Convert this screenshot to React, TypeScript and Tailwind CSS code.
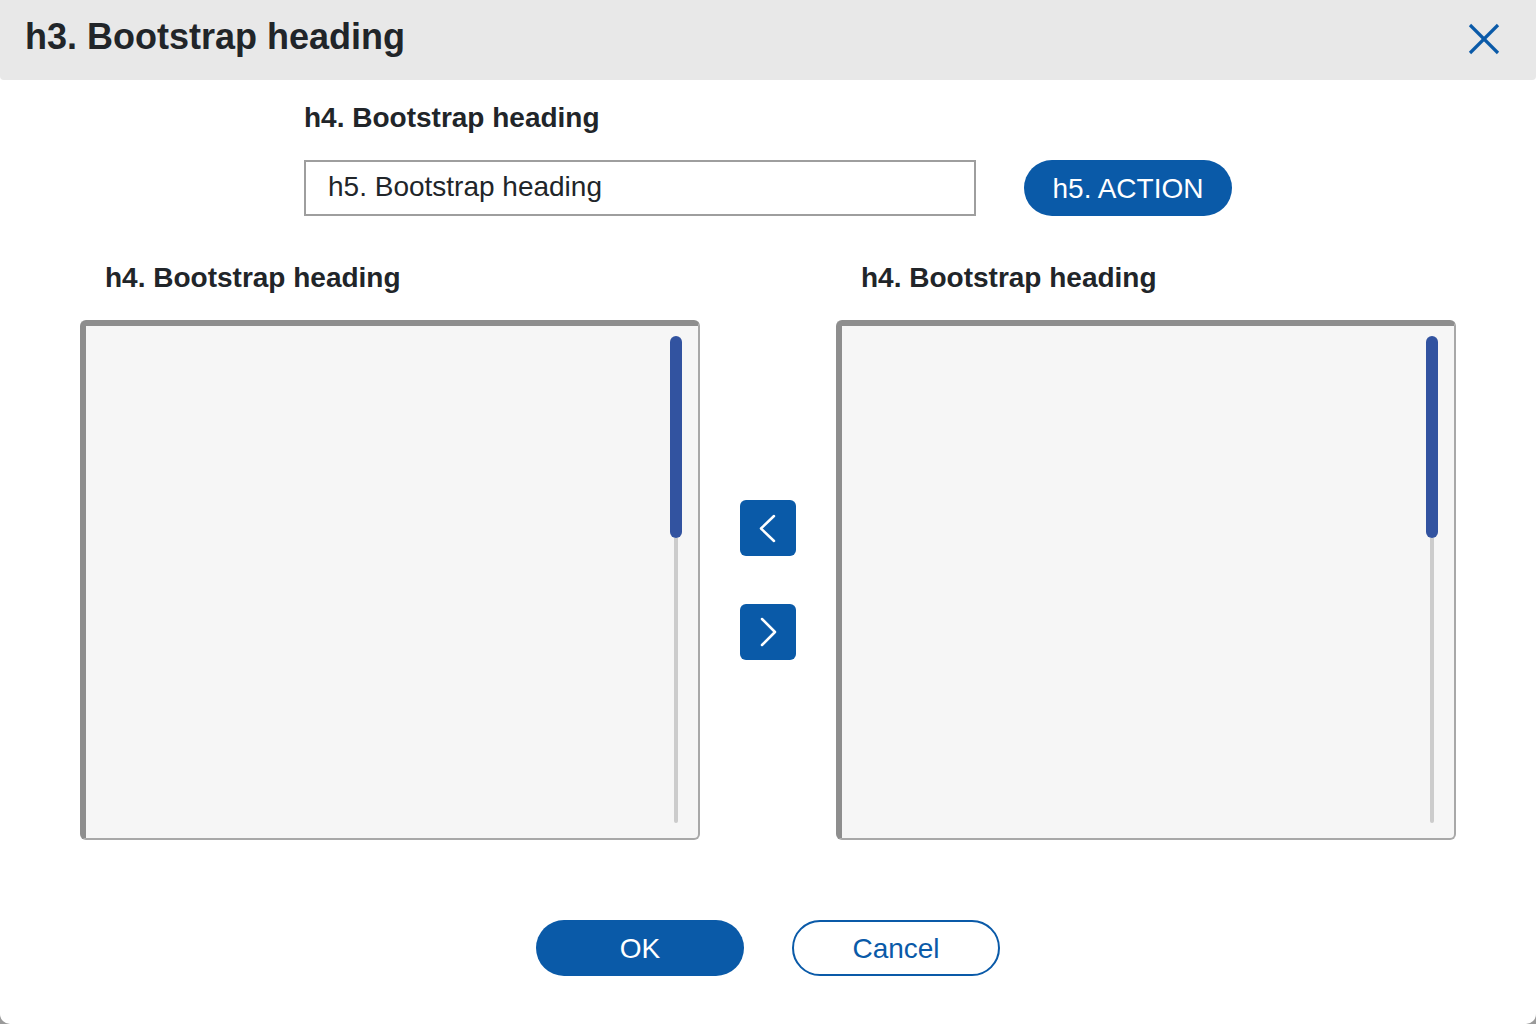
import React from "react";

const font = { fontFamily: '"Liberation Sans", Arial, sans-serif' };

function ListBox() {
  return (
    <div className="w-[620px] h-[520px] bg-[#f6f6f6] rounded-[6px] border-t-[6px] border-l-[6px] border-r-[2px] border-b-[2px] border-t-[#8e8e8e] border-l-[#8e8e8e] border-r-[#a8a8a8] border-b-[#a8a8a8] flex justify-end pt-[10px] pb-[15px] pr-[16px]">
      <div className="w-[12px] flex flex-col items-center">
        <div className="w-[12px] h-[202px] rounded-full bg-[#3253a0]" />
        <div className="w-[4px] flex-1 bg-[#cccccc] rounded-b-full" />
      </div>
    </div>
  );
}

export default function App() {
  return (
    <div className="w-[1536px] h-[1024px] bg-[#9a9a9a]" style={font}>
      <div className="w-full h-full bg-white rounded-b-[10px] flex flex-col">
        <div className="h-[80px] bg-[#e8e8e8] rounded-b-[4px] flex items-center justify-between pl-[25px] pr-[36px]">
          <div className="text-[36px] leading-[40px] font-bold text-[#212529] -mt-[7px]">h3. Bootstrap heading</div>
          <svg width="32" height="32" viewBox="0 0 32 32" className="-mt-[2px]">
            <line x1="2" y1="2" x2="30" y2="30" stroke="#0a5aa8" strokeWidth="3.2" />
            <line x1="30" y1="2" x2="2" y2="30" stroke="#0a5aa8" strokeWidth="3.2" />
          </svg>
        </div>

        <div className="pl-[304px] pt-[22px]">
          <div className="text-[28px] leading-[32px] font-bold text-[#212529]">h4. Bootstrap heading</div>
          <div className="flex items-center gap-[48px] mt-[26px]">
            <div className="w-[672px] h-[56px] border-2 border-[#9e9e9e] flex items-center pl-[22px] pb-[2px] text-[28px] text-[#212529]">
              h5. Bootstrap heading
            </div>
            <button className="w-[208px] h-[56px] rounded-full bg-[#0a5aa8] text-white text-[28px] flex items-center justify-center pt-[2px]">
              h5. ACTION
            </button>
          </div>
        </div>

        <div className="flex pl-[80px] mt-[46px]">
          <div className="flex flex-col">
            <div className="pl-[25px] text-[28px] leading-[32px] font-bold text-[#212529]">h4. Bootstrap heading</div>
            <div className="mt-[26px]">
              <ListBox />
            </div>
          </div>
          <div className="w-[136px] flex flex-col items-center justify-center gap-[48px] pt-[58px]">
            <button className="w-[56px] h-[56px] rounded-[6px] bg-[#0a5aa8] flex items-center justify-center">
              <svg width="56" height="56" viewBox="0 0 56 56">
                <polyline points="34,16 21,28.5 34,41" fill="none" stroke="white" strokeWidth="2.5" strokeLinecap="round" strokeLinejoin="round" />
              </svg>
            </button>
            <button className="w-[56px] h-[56px] rounded-[6px] bg-[#0a5aa8] flex items-center justify-center">
              <svg width="56" height="56" viewBox="0 0 56 56">
                <polyline points="22,15 35,28 22,41" fill="none" stroke="white" strokeWidth="2.5" strokeLinecap="round" strokeLinejoin="round" />
              </svg>
            </button>
          </div>
          <div className="flex flex-col">
            <div className="pl-[25px] text-[28px] leading-[32px] font-bold text-[#212529]">h4. Bootstrap heading</div>
            <div className="mt-[26px]">
              <ListBox />
            </div>
          </div>
        </div>

        <div className="flex justify-center gap-[48px] mt-[80px]">
          <button className="w-[208px] h-[56px] rounded-full bg-[#0a5aa8] text-white text-[28px] flex items-center justify-center pt-[2px]">
            OK
          </button>
          <button className="w-[208px] h-[56px] rounded-full border-2 border-[#0a5aa8] bg-white text-[#0a5aa8] text-[28px] flex items-center justify-center pt-[2px]">
            Cancel
          </button>
        </div>
      </div>
    </div>
  );
}
